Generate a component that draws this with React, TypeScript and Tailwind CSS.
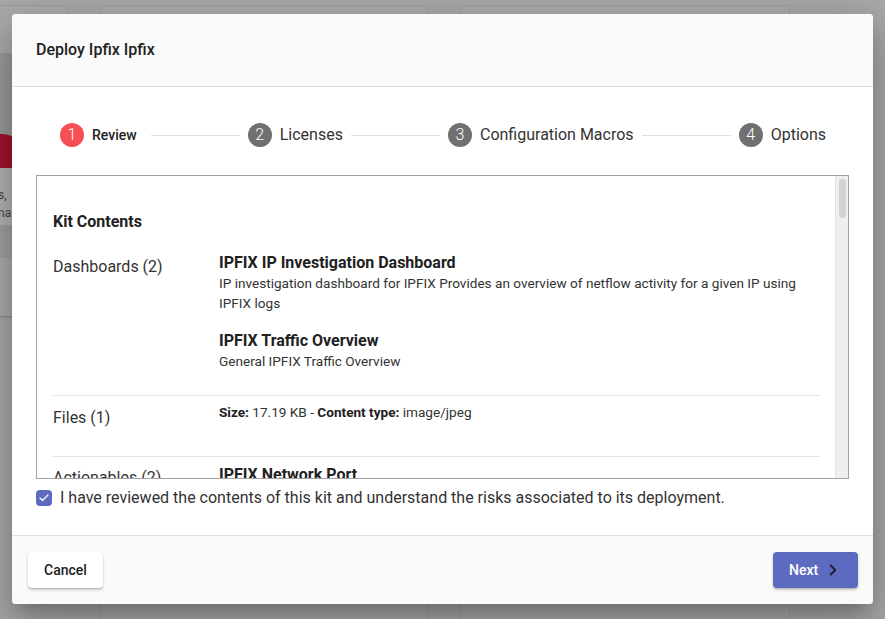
import React from 'react';
import { ChevronRight, Check } from 'lucide-react';

const steps = [
  { n: 1, label: 'Review', active: true },
  { n: 2, label: 'Licenses', active: false },
  { n: 3, label: 'Configuration Macros', active: false },
  { n: 4, label: 'Options', active: false },
];

function Stepper() {
  return (
    <div className="flex items-center pl-12 pr-[47px] pt-[36px]">
      {steps.map((s, i) => (
        <React.Fragment key={s.n}>
          {i > 0 && <div className="flex-1 h-px bg-[#e0e0e0] mx-2" />}
          <div className="flex items-center">
            <div
              className={
                s.active
                  ? 'w-6 h-6 rounded-full bg-[#f64e55] text-white flex items-center justify-center text-[16px] font-light'
                  : 'w-6 h-6 rounded-full bg-[#707070] text-white flex items-center justify-center text-[16px] font-light'
              }
            >
              {s.n}
            </div>
            {s.active ? (
              <span className="ml-2 pr-[6px] text-[14px] font-medium text-[#212121]">{s.label}</span>
            ) : (
              <span className="ml-2 text-[16px] text-[#333]">{s.label}</span>
            )}
          </div>
        </React.Fragment>
      ))}
    </div>
  );
}

function KitContents() {
  return (
    <div className="relative mt-[28px] h-[304px] border border-[#a3a3a3] overflow-hidden">
      {/* scrollbar */}
      <div className="absolute right-0 top-0 bottom-0 w-[13px] bg-[#efefef] border-l border-[#e2e2e2]">
        <div className="mx-auto mt-[3px] w-[7px] h-[39px] rounded-full bg-[#d2d2d2]" />
      </div>
      <div className="pl-4 pr-[28px] pt-[34px] text-[#333]">
        <h3 className="text-[16px] leading-6 font-bold text-[#212121] mb-[17px]">Kit Contents</h3>

        <div className="flex border-b border-[#e3e3e3] pb-[24px]">
          <div className="w-[166px] shrink-0 text-[16px] leading-6 mt-1">Dashboards (2)</div>
          <div className="flex-1">
            <div className="text-[16px] leading-6 font-bold text-[#212121]">IPFIX IP Investigation Dashboard</div>
            <p className="text-[13.6px] leading-5 -mt-[2px]">
              IP investigation dashboard for IPFIX Provides an overview of netflow activity for a given IP using IPFIX logs
            </p>
            <div className="text-[16px] leading-6 font-bold text-[#212121] mt-[16px]">IPFIX Traffic Overview</div>
            <p className="text-[13.6px] leading-5 -mt-[2px]">General IPFIX Traffic Overview</p>
          </div>
        </div>

        <div className="flex border-b border-[#e3e3e3] h-[61px]">
          <div className="w-[166px] shrink-0 text-[16px] leading-6 mt-[10px]">Files (1)</div>
          <div className="flex-1 text-[13.6px] leading-5 mt-[6px]">
            <b className="font-bold text-[#212121]">Size:</b> 17.19 KB - <b className="font-bold text-[#212121]">Content type:</b> image/jpeg
          </div>
        </div>

        <div className="flex">
          <div className="w-[166px] shrink-0 text-[16px] leading-6 mt-[9px]">Actionables (2)</div>
          <div className="flex-1 text-[16px] leading-6 font-bold text-[#212121] mt-[6px]">IPFIX Network Port</div>
        </div>
      </div>
    </div>
  );
}

export default function App() {
  return (
    <div className="relative w-[885px] h-[619px] overflow-hidden bg-[#a8a8a8] font-['Roboto',sans-serif]">
      {/* dimmed page behind the dialog */}
      <div className="flex gap-8 pt-[5px] -ml-[40px]">
        <div className="w-[108px] h-[313px] rounded border border-[#9c9c9c] bg-[#aaaaaa] flex flex-col">
          <div className="h-[47px]" />
          <div className="h-[115px] bg-[#9a9a9a] flex items-end pl-[10px]">
            <div className="w-[60px] h-[34px] rounded-t-full bg-[#a3122b]" />
          </div>
          <div className="h-[57px] bg-[#b3b3b3] text-[12px] leading-[18px] text-[#444] pt-[18px] pl-[37px]">
            <div>s,</div>
            <div>na</div>
          </div>
          <div className="h-[33px] bg-[#a0a0a0]" />
          <div className="flex-1 border-b border-[#8f8f8f]" />
        </div>
        <div className="w-[328px] h-[700px] rounded border border-[#9c9c9c] bg-[#aaaaaa]" />
        <div className="w-[330px] h-[700px] rounded border border-[#9c9c9c] bg-[#aaaaaa]" />
      </div>

      {/* dialog */}
      <div className="absolute left-[12px] top-[14px] w-[861px] h-[590px] rounded bg-white shadow-[0_11px_15px_-7px_rgba(0,0,0,0.2),0_24px_38px_3px_rgba(0,0,0,0.14),0_9px_46px_8px_rgba(0,0,0,0.12)] flex flex-col overflow-hidden">
        <div className="h-[73px] shrink-0 bg-[#fafafa] border-b border-[#dedede] flex items-center px-6">
          <h2 className="text-[16px] font-medium text-[#212121]">Deploy Ipfix Ipfix</h2>
        </div>

        <div className="flex-1">
          <Stepper />
          <div className="px-6">
            <KitContents />
            <label className="flex items-center mt-[11px] h-4">
              <span className="w-4 h-4 rounded-sm bg-[#5c6bc0] flex items-center justify-center">
                <Check size={12} strokeWidth={2.5} className="text-white" />
              </span>
              <span className="ml-2 text-[16px] text-[#333]">
                I have reviewed the contents of this kit and understand the risks associated to its deployment.
              </span>
            </label>
          </div>
        </div>

        <div className="h-[69px] shrink-0 bg-[#fafafa] border-t border-[#dedede] flex items-center justify-between pl-4 pr-[15px]">
          <button className="h-9 px-4 rounded bg-white text-[14px] font-medium text-[#212121] shadow-[0_2px_3px_rgba(0,0,0,0.2),0_1px_1px_rgba(0,0,0,0.1)]">
            Cancel
          </button>
          <button className="h-9 w-[85px] pl-4 rounded bg-[#5c6bc0] text-[14px] font-medium text-white flex items-center gap-[6px] shadow-[0_2px_3px_rgba(0,0,0,0.2),0_1px_1px_rgba(0,0,0,0.1)]">
            Next
            <ChevronRight size={18} strokeWidth={2.5} className="text-[#1c1c30]" />
          </button>
        </div>
      </div>
    </div>
  );
}
